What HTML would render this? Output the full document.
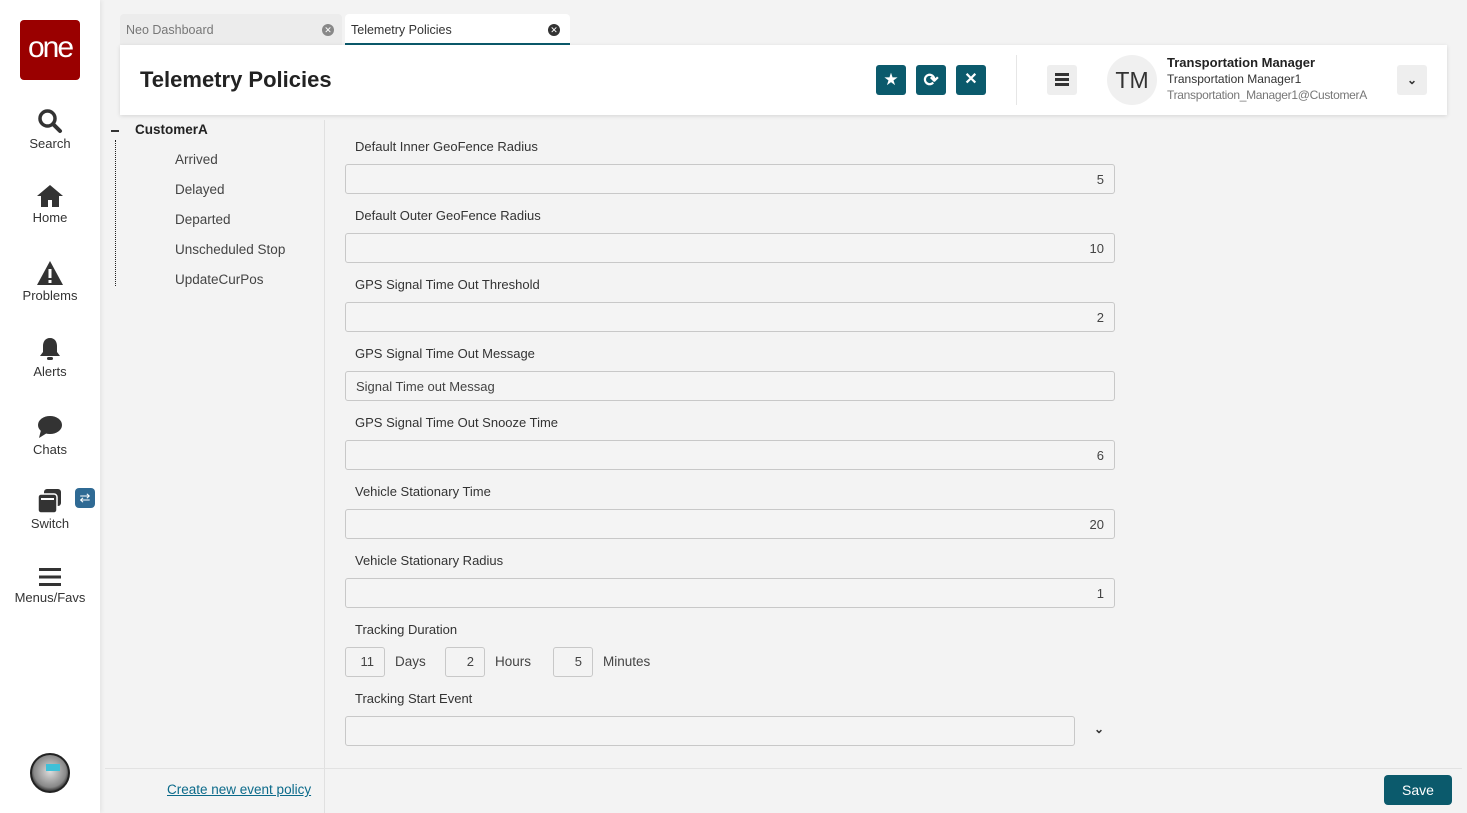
<!DOCTYPE html>
<html><head><meta charset="utf-8"><style>
*{box-sizing:border-box;margin:0;padding:0}
body{width:1467px;height:813px;background:#f3f3f3;font-family:"Liberation Sans",sans-serif;color:#333;position:relative;overflow:hidden;font-size:13px}
.a{position:absolute}
.side{left:0;top:0;width:100px;height:813px;background:#fff;box-shadow:2px 0 4px rgba(0,0,0,.06)}
.nav{position:absolute;left:0;width:100px;text-align:center;font-size:13px;color:#333}
.nav svg{display:block;margin:0 auto 2px}
.lbl{position:absolute;left:355px;font-size:13px;color:#333}
.inp{position:absolute;left:345px;width:770px;height:30px;border:1px solid #c8c8c8;border-radius:3px;background:#f4f4f4;font-size:13px;color:#444;text-align:right;padding:7px 10px 0}
.tree{position:absolute;left:175px;font-size:13.5px;color:#444}
.btn{position:absolute;top:65px;width:30px;height:30px;background:#0b5a6c;border-radius:3px}
.sm{position:absolute;top:647px;width:40px;height:30px;border:1px solid #c8c8c8;border-radius:3px;text-align:right;padding:6px 10px 0;color:#444}
.unit{position:absolute;top:654px;color:#444;font-size:13.5px}
</style></head><body>
<div class="a side"></div>
<div class="a" style="left:20px;top:20px;width:60px;height:60px;background:#9a0000;border-radius:4px;color:#fff;font-size:30px;text-align:center;line-height:56px;letter-spacing:-2px">one</div>
<div class="nav" style="top:108px"><svg width="26" height="26" viewBox="0 0 26 26"><circle cx="10.5" cy="10.5" r="7.5" fill="none" stroke="#333" stroke-width="3.5"/><path d="M16 16l7 7" stroke="#333" stroke-width="4" stroke-linecap="round"/></svg>Search</div>
<div class="nav" style="top:184px"><svg width="28" height="24" viewBox="0 0 28 24"><path d="M14 1L1 12h4v11h7v-7h4v7h7V12h4z" fill="#333"/></svg>Home</div>
<div class="nav" style="top:260px"><svg width="28" height="26" viewBox="0 0 28 26"><path d="M14 1L1 25h26z" fill="#333"/><rect x="12.5" y="9" width="3" height="9" fill="#fff"/><rect x="12.5" y="20" width="3" height="3" fill="#fff"/></svg>Problems</div>
<div class="nav" style="top:336px"><svg width="24" height="26" viewBox="0 0 24 26"><path d="M12 2c-5 0-7 4-7 8v6l-3 4h20l-3-4v-6c0-4-2-8-7-8z" fill="#333"/><rect x="9" y="21" width="6" height="3" rx="1.5" fill="#333"/></svg>Alerts</div>
<div class="nav" style="top:414px"><svg width="28" height="26" viewBox="0 0 28 26"><ellipse cx="14" cy="11" rx="12" ry="9" fill="#333"/><path d="M5 16l-2 8 8-5z" fill="#333"/></svg>Chats</div>
<div class="nav" style="top:488px"><svg width="26" height="26" viewBox="0 0 26 26"><rect x="7" y="1" width="17" height="17" rx="3" fill="#333"/><rect x="1" y="6" width="19" height="19" rx="3" fill="#333" stroke="#fff" stroke-width="1.5"/><rect x="4" y="10" width="13" height="2" fill="#fff"/></svg>Switch</div>
<div class="a" style="left:75px;top:488px;width:20px;height:20px;background:#2f6a94;border-radius:4px;color:#fff;font-size:13px;text-align:center;line-height:20px">⇄</div>
<div class="nav" style="top:566px"><svg width="24" height="22" viewBox="0 0 24 22"><rect x="1" y="2" width="22" height="3" fill="#333"/><rect x="1" y="9.5" width="22" height="3" fill="#333"/><rect x="1" y="17" width="22" height="3" fill="#333"/></svg>Menus/Favs</div>
<div class="a" style="left:30px;top:753px;width:40px;height:40px;border-radius:50%;background:radial-gradient(circle at 50% 45%,#ddd,#888 60%,#333 75%);border:2px solid #222"></div>
<div class="a" style="left:46px;top:764px;width:14px;height:7px;background:#3fc0d8"></div>

<div class="a" style="left:120px;top:14px;width:222px;height:31px;background:#ececec;border-radius:4px 4px 0 0;font-size:12.5px;color:#777;padding:9px 6px">Neo Dashboard</div>
<div class="a" style="left:322px;top:24px;width:12px;height:12px;border-radius:50%;background:#888;color:#fff;font-size:9px;text-align:center;line-height:12px">✕</div>
<div class="a" style="left:345px;top:14px;width:225px;height:31px;background:#fff;border-radius:4px 4px 0 0;border-bottom:2px solid #0b5a6c;font-size:12.5px;color:#333;padding:9px 6px">Telemetry Policies</div>
<div class="a" style="left:548px;top:24px;width:12px;height:12px;border-radius:50%;background:#333;color:#fff;font-size:9px;text-align:center;line-height:12px">✕</div>

<div class="a" style="left:120px;top:45px;width:1327px;height:70px;background:#fff;box-shadow:0 1px 4px rgba(0,0,0,.12)"></div>
<div class="a" style="left:140px;top:67px;font-size:22px;font-weight:bold;color:#222">Telemetry Policies</div>
<div class="btn" style="left:876px;color:#fff;text-align:center;font-size:17px;line-height:30px">★</div>
<div class="btn" style="left:916px;color:#fff;text-align:center;font-size:18px;line-height:30px;font-weight:bold">⟳</div>
<div class="btn" style="left:956px;color:#fff;text-align:center;font-size:16px;line-height:30px;font-weight:bold">✕</div>
<div class="a" style="left:1016px;top:55px;width:1px;height:50px;background:#e6e6e6"></div>
<div class="a" style="left:1047px;top:65px;width:30px;height:30px;background:#eee;border-radius:3px"></div>
<div class="a" style="left:1055px;top:73px;width:14px;height:3px;background:#333;box-shadow:0 5px 0 #333,0 10px 0 #333"></div>
<div class="a" style="left:1107px;top:55px;width:50px;height:50px;border-radius:50%;background:#f0f0f0;font-size:23px;color:#333;text-align:center;line-height:50px">TM</div>
<div class="a" style="left:1167px;top:55px;font-size:13px;font-weight:bold;color:#222">Transportation Manager</div>
<div class="a" style="left:1167px;top:72px;font-size:12px;color:#333">Transportation Manager1</div>
<div class="a" style="left:1167px;top:88px;font-size:12px;color:#777;letter-spacing:-0.3px">Transportation_Manager1@CustomerA</div>
<div class="a" style="left:1397px;top:65px;width:30px;height:30px;background:#eee;border-radius:3px;text-align:center;line-height:30px;font-size:12px;font-weight:bold">⌄</div>

<div class="a" style="left:324px;top:120px;width:1px;height:693px;background:#e0e0e0"></div>
<div class="a" style="left:105px;top:768px;width:1357px;height:1px;background:#e2e2e2"></div>
<div class="a" style="left:111px;top:130px;width:8px;height:2px;background:#333"></div>
<div class="a" style="left:115px;top:140px;height:146px;border-left:1px dotted #222"></div>
<div class="a" style="left:135px;top:122px;font-weight:bold;color:#222;font-size:13.5px">CustomerA</div>
<div class="tree" style="top:152px">Arrived</div>
<div class="tree" style="top:182px">Delayed</div>
<div class="tree" style="top:212px">Departed</div>
<div class="tree" style="top:242px">Unscheduled Stop</div>
<div class="tree" style="top:272px">UpdateCurPos</div>

<div class="lbl" style="top:139px">Default Inner GeoFence Radius</div><div class="inp" style="top:164px">5</div>
<div class="lbl" style="top:208px">Default Outer GeoFence Radius</div><div class="inp" style="top:233px">10</div>
<div class="lbl" style="top:277px">GPS Signal Time Out Threshold</div><div class="inp" style="top:302px">2</div>
<div class="lbl" style="top:346px">GPS Signal Time Out Message</div><div class="inp" style="top:371px;text-align:left">Signal Time out Messag</div>
<div class="lbl" style="top:415px">GPS Signal Time Out Snooze Time</div><div class="inp" style="top:440px">6</div>
<div class="lbl" style="top:484px">Vehicle Stationary Time</div><div class="inp" style="top:509px">20</div>
<div class="lbl" style="top:553px">Vehicle Stationary Radius</div><div class="inp" style="top:578px">1</div>
<div class="lbl" style="top:622px">Tracking Duration</div>
<div class="sm" style="left:345px">11</div><div class="unit" style="left:395px">Days</div>
<div class="sm" style="left:445px">2</div><div class="unit" style="left:495px">Hours</div>
<div class="sm" style="left:553px">5</div><div class="unit" style="left:603px">Minutes</div>
<div class="lbl" style="top:691px">Tracking Start Event</div>
<div class="inp" style="top:716px;width:730px"></div>
<div class="a" style="left:1094px;top:722px;font-size:12px;font-weight:bold">⌄</div>

<div class="a" style="left:167px;top:782px;color:#0b6a8a;text-decoration:underline;font-size:13.5px">Create new event policy</div>
<div class="a" style="left:1384px;top:775px;width:68px;height:30px;background:#0b5a6c;border-radius:4px;color:#fff;text-align:center;line-height:30px;font-size:14px">Save</div>
</body></html>
